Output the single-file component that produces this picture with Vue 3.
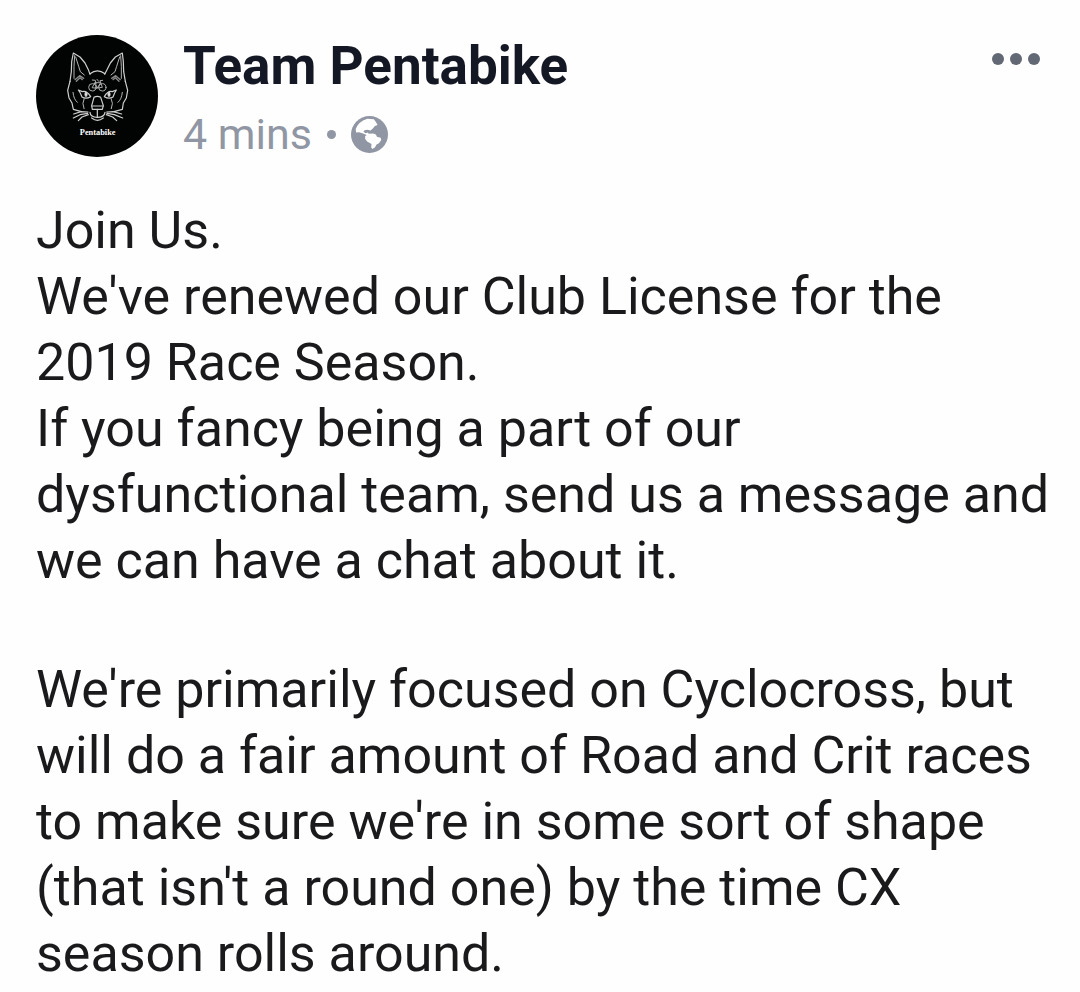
<script setup>
const author = 'Team Pentabike'
const age = '4 mins'
const paragraphs = [
  [
    'Join Us.',
    "We've renewed our Club License for the 2019 Race Season.",
    'If you fancy being a part of our dysfunctional team, send us a message and we can have a chat about it.',
  ],
  [
    "We're primarily focused on Cyclocross, but will do a fair amount of Road and Crit races to make sure we're in some sort of shape (that isn't a round one) by the time CX season rolls around.",
  ],
]
</script>

<template>
  <article class="post">
    <header class="head">
      <svg class="avatar" viewBox="19 18 366 366" role="img" aria-label="Pentabike logo">
        <circle cx="202" cy="201" r="183" fill="#020303" />
        <g fill="none" stroke="#cfcfcf" stroke-width="3.6" stroke-linecap="round" stroke-linejoin="round">
          <!-- ears -->
          <path d="M121 157 L125 128 L126 98 L131 72 L151 84 L166 102 L176 122 L181 136" />
          <path d="M287 157 L282 128 L281 98 L278 72 L257 84 L242 102 L232 122 L225 136" />
          <path d="M135 80 L133 112 L133 148 M138 84 L147 112 L152 128 L164 138" stroke-width="2.6" />
          <path d="M273 80 L275 112 L275 148 M270 84 L261 112 L256 128 L244 138" stroke-width="2.6" />
          <path d="M136 152 L150 140 L162 148 M140 157 L151 146 L158 152" stroke="#8a8a8a" stroke-width="4" />
          <path d="M272 152 L258 140 L246 148 M268 157 L257 146 L250 152" stroke="#8a8a8a" stroke-width="4" />
          <!-- forehead and cheeks -->
          <path d="M181 134 Q203 117 226 134" />
          <path d="M121 157 L114 184 L118 207 L127 222 L131 241 L155 248" />
          <path d="M287 157 L294 184 L290 207 L281 222 L278 241 L253 248" />
          <path d="M130 190 Q132 211 143 220 M278 190 Q276 211 265 220" stroke-width="2.6" />
          <path d="M163 210 Q156 222 163 239 M245 210 Q252 222 245 239" stroke-width="2.6" />
          <!-- bicycle -->
          <g stroke="#b4b4b4" stroke-width="2.8">
            <circle cx="188" cy="175" r="11" />
            <circle cx="218" cy="175" r="11" />
            <path d="M188 175 L196 161 L213 161 L203 177 Z M196 161 L203 177 L218 175 L211 155 L219 154 M188 153 L197 154 L199 164 M202 151 L207 157" />
          </g>
          <!-- eyes -->
          <path d="M146 183 L158 188 Q171 184 183 203 Q169 211 157 204 Q153 192 146 183 Z" />
          <path d="M260 183 L248 188 Q235 184 224 203 Q238 211 250 204 Q254 192 260 183 Z" />
          <ellipse cx="169" cy="196" rx="3" ry="6" fill="#fff" />
          <ellipse cx="238" cy="196" rx="3" ry="6" fill="#fff" />
          <!-- nose and muzzle -->
          <path d="M193 205 L186 230 L188 241 L218 241 L221 230 L213 205 Q203 199 193 205" />
          <path d="M187 231 L220 231 M203 241 V265" />
          <path d="M181 250 Q182 265 203 265 Q224 265 226 250" />
          <path d="M186 267 Q203 281 221 267" />
          <!-- whiskers -->
          <path d="M175 249 L154 248 L132 255 M174 253 L151 257 L131 267 M176 257 L157 264 L146 275" />
          <path d="M231 249 L251 248 L276 255 M232 253 L254 257 L279 267 M230 257 L249 264 L261 275" />
        </g>
        <text class="logo-text" x="204" y="319" text-anchor="middle">Pentabike</text>
      </svg>

      <div class="byline">
        <h1 class="name">{{ author }}</h1>
        <p class="meta">
          <span>{{ age }}</span>
          <span class="dot"></span>
          <svg class="globe" viewBox="94 27 110 110" role="img" aria-label="Public">
            <circle cx="149" cy="82" r="55" fill="#9096a3" />
            <path
              fill="#fff"
              d="M108 66 Q117 42 143 35 L152 36 L162 37 L168 45 L173 54 L165 57 L159 64 L152 70 L143 68 L134 69 L131 74 L138 78 L144 76 L148 82 L143 85 L130 79 L118 75 L109 76 Z"
            />
            <path
              fill="#fff"
              d="M136 87 L146 80 L160 79 L168 82 L171 89 L182 92 L184 98 L177 108 L170 112 L165 121 L157 125 L154 120 L155 110 L142 103 L136 95 Z"
            />
          </svg>
        </p>
      </div>

      <button class="more" type="button" aria-label="More options">
        <span></span><span></span><span></span>
      </button>
    </header>

    <div class="body">
      <p v-for="(lines, i) in paragraphs" :key="i">
        <template v-for="(line, j) in lines" :key="j"><br v-if="j > 0" />{{ line }}</template>
      </p>
    </div>
  </article>
</template>

<style>
body {
  margin: 0;
  background: #fefefe;
}
</style>

<style scoped>
.post {
  box-sizing: border-box;
  padding: 35px 16px 0 36px;
  font-family: Roboto, 'Liberation Sans', sans-serif;
  color: #1a1a1c;
}
.head {
  display: flex;
  align-items: flex-start;
}
.avatar {
  flex: none;
  width: 122px;
  height: 122px;
}
.logo-text {
  font: bold 25px 'Liberation Serif', serif;
  fill: #fff;
}
.byline {
  flex: 1;
  margin-left: 25px;
}
.name {
  margin: 0;
  font-size: 53px;
  line-height: 62px;
  font-weight: 700;
  color: #141824;
}
.meta {
  display: flex;
  align-items: center;
  margin: 12px 0 0;
  font-size: 43px;
  line-height: 50px;
  color: #9096a3;
}
.dot {
  width: 9px;
  height: 9px;
  margin: 0 15px;
  border-radius: 50%;
  background: #9096a3;
}
.globe {
  width: 37px;
  height: 37px;
}
.more {
  display: flex;
  gap: 6px;
  margin: 12px 16px 0 0;
  padding: 6px 8px;
  border: 0;
  background: none;
  cursor: pointer;
}
.more span {
  width: 12px;
  height: 12px;
  border-radius: 50%;
  background: #626874;
}
.body {
  margin-top: 39px;
  font-size: 52px;
  line-height: 66px;
}
.body p {
  margin: 0 0 63px;
}
.body p:last-child {
  margin-bottom: 0;
}
</style>
